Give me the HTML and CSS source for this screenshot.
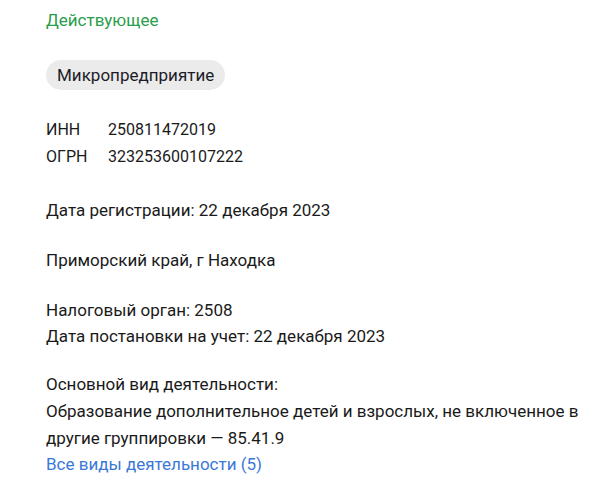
FILE: index.html
```html
<html lang="ru">
<head>
    <meta charset="UTF-8">
    <title>Карточка организации</title>
    <link rel="stylesheet" href="styles.css">
</head>
<body>
    <div class="card">
        <div class="status">Действующее</div>
        <div class="tags">
            <span class="tag">Микропредприятие</span>
        </div>
        <table class="codes">
            <tr>
                <td class="code-name">ИНН</td>
                <td>250811472019</td>
            </tr>
            <tr>
                <td class="code-name">ОГРН</td>
                <td>323253600107222</td>
            </tr>
        </table>
        <div class="block reg">Дата регистрации: 22 декабря 2023</div>
        <div class="block">Приморский край, г Находка</div>
        <div class="block">
            <div>Налоговый орган: 2508</div>
            <div>Дата постановки на учет: 22 декабря 2023</div>
        </div>
        <div class="block activity">
            <div>Основной вид деятельности:</div>
            <div class="okved">Образование дополнительное детей и взрослых, не включенное в другие группировки — 85.41.9</div>
            <a class="more" href="#">Все виды деятельности (5)</a>
        </div>
    </div>
</body>
</html>
```

FILE: styles.css
```css
body{
    margin: 0;
    background-color: #fff;
    font-family: Roboto, "Noto Sans", sans-serif;
    font-size: 17px;
    line-height: 26px;
    color: #1a1a1a;
}
.card{
    width: 545px;
    padding: 7px 0 0 46px;
}
.status{
    color: #2a9d4b;
}
.tags{
    margin-top: 27px;
    height: 30px;
}
.tag{
    display: inline-block;
    padding: 2px 11px;
    border-radius: 15px;
    background-color: #ebebeb;
    color: #1c1c28;
}
.codes{
    margin-top: 26px;
    border-collapse: collapse;
}
.codes td{
    padding: 0;
    height: 27px;
}
.code-name{
    width: 62px;
}
.block{
    margin-top: 24px;
}
.reg{
    margin-top: 27px;
}
.activity{
    margin-top: 22px;
}
.okved{
    line-height: 26.5px;
    margin-top: 1px;
}
.more{
    color: #3a78d8;
    text-decoration: none;
}
```
